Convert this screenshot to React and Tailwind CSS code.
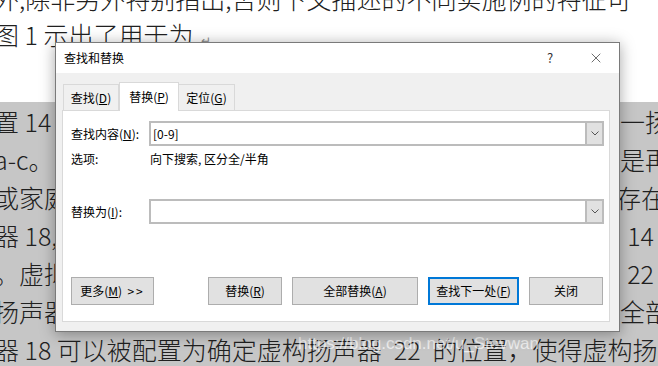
import { X } from "lucide-react";

const docLines = [
  { left: "置 14", right: "一扬", rc: "mr-[-6px]" },
  { left: "a-c。", right: "是再", rc: "mr-[-6px]" },
  { left: "或家庭", right: "存在", rc: "mr-[-2px]" },
  { left: "器 18,并", right: "14", rc: "mr-[10px]" },
  { left: "。虚拟", right: "22", rc: "mr-[10px]" },
  { left: "扬声器", right: "全部", rc: "mr-[-6px]" },
];

function Btn({ children, w, primary }) {
  return (
    <button
      className={`h-[28px] ${w} bg-[#e1e1e1] text-[12px] text-black flex items-center justify-center ${
        primary ? "border-2 border-[#0078d7]" : "border border-[#adadad]"
      }`}
    >
      {children}
    </button>
  );
}

function Combo({ value }) {
  return (
    <div className="w-[455px] h-[25px] border-2 border-[#bcbcbc] bg-white flex items-center">
      <span className="flex-1 pl-[2px] text-[12px] text-black leading-none">{value}</span>
      <div className="w-[17px] h-full bg-[#e1e1e1] border-l-2 border-[#bcbcbc] flex items-center justify-center">
        <svg width="8" height="5" viewBox="0 0 8 5">
          <path d="M0.5 0.5 L4 4 L7.5 0.5" fill="none" stroke="#555" strokeWidth="1" />
        </svg>
      </div>
    </div>
  );
}

export default function App() {
  return (
    <div className="relative w-[658px] h-[366px] overflow-hidden bg-white font-['Noto_Sans_CJK_SC',sans-serif]">
      {/* 文档背景 */}
      <div className="ml-[-6px] w-[670px] text-[25px] font-light text-[#202020]">
        <div className="mt-[-22px] leading-[41px] whitespace-nowrap">
          外,除非另外特别指出,否则下文描述的不同实施例的特征可
        </div>
        <div className="leading-[30px] whitespace-nowrap">
          图 1 示出了用于为<span className="text-[12px] text-[#8a8a8a] ml-[8px]">↵</span>
        </div>
        <div className="h-[47px]" />
        <div className="bg-[#c6c6c6] h-[300px]">
          {docLines.map((l, i) => (
            <div key={i} className="h-[38px] leading-[38px] flex justify-between whitespace-nowrap">
              <span>{l.left}</span>
              <span className={l.rc}>{l.right}</span>
            </div>
          ))}
          <div className="h-[38px] leading-[38px] whitespace-nowrap">
            器 18 可以被配置为确定虚构扬声器<span className="mx-[12px]">22</span>的位置，使得虚构扬
          </div>
        </div>
      </div>

      {/* 水印 */}
      <span className="absolute left-[298px] top-[331px] text-[17px] text-white/70 font-['Liberation_Sans',sans-serif] whitespace-nowrap">
        https://blog.csdn.net/u_Stevwan
      </span>

      {/* 查找和替换 对话框 */}
      <div className="absolute left-[55px] top-[42px] w-[565px] h-[290px] border border-[#7a7a7a] bg-[#f0f0f0] shadow-[0_2px_14px_rgba(0,0,0,0.35)] flex flex-col">
        <div className="h-[30px] bg-white flex items-center text-[12px] text-black">
          <span className="pl-[8px] flex-1">查找和替换</span>
          <span className="w-[46px] text-center text-[13px] text-[#333]">?</span>
          <span className="w-[46px] flex justify-center">
            <X size={16} strokeWidth={1} color="#222" />
          </span>
        </div>

        <div className="flex-1 flex flex-col pt-[9px]">
          {/* 选项卡 */}
          <div className="flex items-end pl-[7px] h-[28px] text-[12px] text-black">
            <div className="w-[56px] h-[26px] border border-b-0 border-[#d9d9d9] flex items-center justify-center">
              查找(<span className="underline">D</span>)
            </div>
            <div className="relative z-10 w-[60px] h-[29px] mb-[-1px] bg-white border border-b-0 border-[#d9d9d9] flex items-center justify-center">
              替换(<span className="underline">P</span>)
            </div>
            <div className="w-[56px] h-[26px] border border-b-0 border-l-0 border-[#d9d9d9] flex items-center justify-center">
              定位(<span className="underline">G</span>)
            </div>
          </div>

          {/* 面板 */}
          <div className="ml-[6px] w-[548px] h-[212px] bg-white border border-[#d9d9d9] flex flex-col pt-[10px] text-[12px] text-black">
            <div className="flex items-center pl-[8px]">
              <span className="w-[78px]">
                查找内容(<span className="underline">N</span>):
              </span>
              <Combo value="[0-9]" />
            </div>
            <div className="flex items-center pl-[8px] mt-[3px] h-[20px]">
              <span className="w-[79px]">选项:</span>
              <span>向下搜索, 区分全/半角</span>
            </div>
            <div className="flex items-center pl-[8px] mt-[30px]">
              <span className="w-[78px]">
                替换为(<span className="underline">I</span>):
              </span>
              <Combo value="" />
            </div>
            <div className="flex justify-between pl-[8px] pr-[6px] mt-[53px]">
              <Btn w="w-[83px]">
                更多(<span className="underline">M</span>)&nbsp;&nbsp;<span className="tracking-[2px]">&gt;&gt;</span>
              </Btn>
              <div className="flex gap-[10px]">
                <Btn w="w-[74px]">
                  替换(<span className="underline">R</span>)
                </Btn>
                <Btn w="w-[126px]">
                  全部替换(<span className="underline">A</span>)
                </Btn>
                <Btn w="w-[91px]" primary>
                  查找下一处(<span className="underline">F</span>)
                </Btn>
                <Btn w="w-[74px]">关闭</Btn>
              </div>
            </div>
          </div>
        </div>
      </div>
    </div>
  );
}
